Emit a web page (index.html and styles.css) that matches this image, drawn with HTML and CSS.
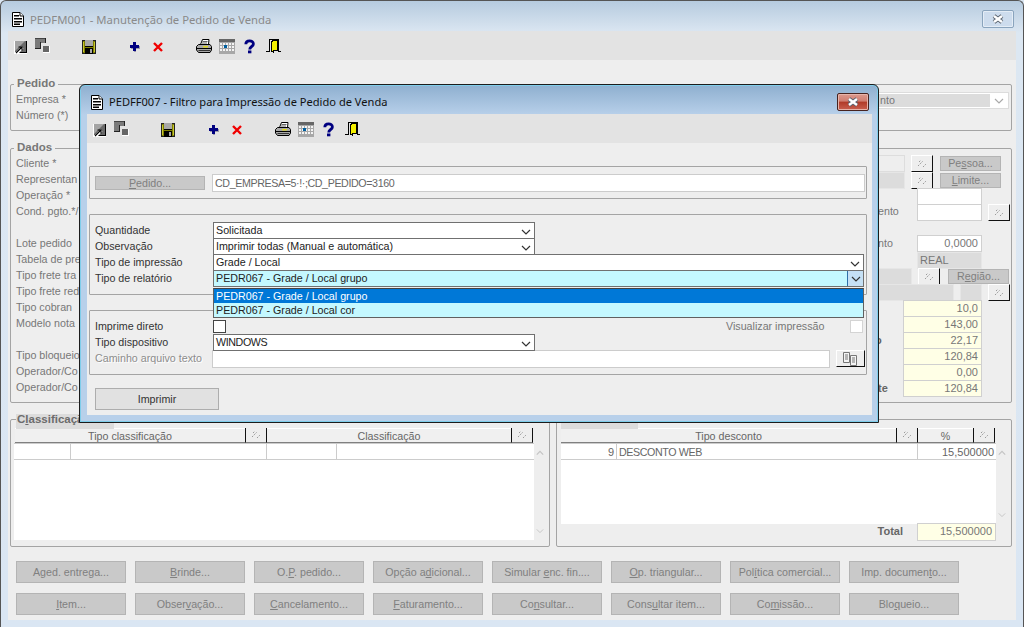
FILE: index.html
```html
<!DOCTYPE html>
<html lang="pt">
<head>
<meta charset="utf-8">
<title>PEDFM001</title>
<link rel="stylesheet" href="styles.css">
</head>
<body>
<svg class="sprite" xmlns="http://www.w3.org/2000/svg">
  <symbol id="i-doc" viewBox="0 0 12 15">
    <path d="M.5.5H8L11.5 4V14.5H.5Z" fill="#fff" stroke="#000"/>
    <path d="M8 .5V4H11.5" fill="#fff" stroke="#000"/>
    <path d="M2 3H7V4.5H2ZM2 6H10V7.5H2ZM2 9H10V10.5H2ZM2 11.5H8V13H2Z" fill="#000"/>
  </symbol>
  <symbol id="i-a" viewBox="0 0 18 18">
    <rect x="0" y="3" width="13" height="13" fill="#fff"/>
    <rect x="1" y="3" width="11" height="11" fill="#6a6a6a"/>
    <path d="M1 3H11L1 13Z" fill="#a4a4a4"/>
    <path d="M12 3H13V15H4V14H12Z" fill="#000"/>
    <path d="M2.500 15.500L8.500 9.500" fill="none" stroke="#fff" stroke-width="2.600"/>
    <path d="M2 15L8 9M4.500 9H8V12.500" fill="none" stroke="#000" stroke-width="1.100"/>
  </symbol>
  <symbol id="i-b" viewBox="0 0 18 18" shape-rendering="crispEdges">
    <rect x="0" y="0" width="11" height="11" fill="#7a7a7a"/>
    <rect x="0" y="0" width="11" height="1" fill="#444"/>
    <rect x="6" y="5" width="5" height="6" fill="#e3e3e3"/>
    <rect x="5" y="4" width="1" height="7" fill="#222"/>
    <rect x="0" y="10" width="6" height="1" fill="#222"/>
    <rect x="10" y="0" width="1" height="5" fill="#222"/>
    <rect x="8" y="8" width="7" height="7" fill="#fff"/>
    <rect x="8" y="8" width="6" height="6" fill="#666"/>
  </symbol>
  <symbol id="i-save" viewBox="0 0 18 18" shape-rendering="crispEdges">
    <rect x="0" y="2" width="14" height="14" fill="#222"/>
    <rect x="1" y="3" width="12" height="12" fill="#808000"/>
    <rect x="1" y="4" width="1" height="10" fill="#c8c830"/>
    <rect x="12" y="4" width="1" height="10" fill="#c8c830"/>
    <rect x="3" y="2" width="8" height="6" fill="#a8a8a8"/>
    <rect x="3" y="8" width="8" height="1" fill="#000"/>
    <rect x="3" y="10" width="8" height="6" fill="#000"/>
    <rect x="8" y="11" width="2" height="4" fill="#a8a8a8"/>
  </symbol>
  <symbol id="i-plus" viewBox="0 0 18 18" shape-rendering="crispEdges">
    <path d="M5 6H7V8H11V11H7V14H5V11H2V9H5Z" fill="#9a9aa8"/>
    <path d="M4 4H7V7H10V10H7V13H4V10H1V7H4Z" fill="#000080"/>
  </symbol>
  <symbol id="i-x" viewBox="0 0 18 18">
    <path d="M1 5L9 13M9 5L1 13" stroke="#f00000" stroke-width="2.400" fill="none"/>
  </symbol>
  <symbol id="i-print" viewBox="0 0 18 18">
    <path d="M4.500 6.500L6.500 1.500H13L12.500 6.500Z" fill="#fff" stroke="#000"/>
    <path d="M6.500 3.500H11.500M6 5H11" stroke="#666"/>
    <path d="M.5 12V8.500L2.500 6.500H14L15.500 8.500V12L14 14.500H2.500Z" fill="#a8a8a8" stroke="#000"/>
    <path d="M1 10.500H15" stroke="#000"/>
    <path d="M2.500 12.500H14" stroke="#333"/>
    <rect x="7" y="8" width="5" height="1.500" fill="#e0d820"/>
  </symbol>
  <symbol id="i-cal" viewBox="0 0 18 18" shape-rendering="crispEdges">
    <rect x="0" y="1" width="16" height="15" fill="#a8a8a8"/>
    <rect x="0" y="1" width="16" height="3" fill="#666"/>
    <g fill="#f4f4f4">
      <rect x="1" y="5" width="2" height="2"/><rect x="4" y="5" width="2" height="2"/><rect x="7" y="5" width="2" height="2"/><rect x="10" y="5" width="2" height="2"/><rect x="13" y="5" width="2" height="2"/>
      <rect x="1" y="8" width="2" height="2"/><rect x="4" y="8" width="2" height="2"/><rect x="7" y="8" width="2" height="2"/><rect x="10" y="8" width="2" height="2"/><rect x="13" y="8" width="2" height="2"/>
      <rect x="1" y="11" width="2" height="2"/><rect x="4" y="11" width="2" height="2"/><rect x="7" y="11" width="2" height="2"/><rect x="10" y="11" width="2" height="2"/><rect x="13" y="11" width="2" height="2"/>
    </g>
    <rect x="5" y="7" width="3" height="3" fill="#005f9f"/>
  </symbol>
  <symbol id="i-help" viewBox="0 0 18 18">
    <path d="M1.800 6.200C1.800 1.800 9.400 1.800 9.400 6C9.400 8.600 5.700 8.400 5.700 11.400" fill="none" stroke="#000080" stroke-width="2.800"/>
    <rect x="4" y="12.500" width="3.400" height="2.800" fill="#000080"/>
  </symbol>
  <symbol id="i-door" viewBox="0 0 18 18" shape-rendering="crispEdges">
    <rect x="3" y="1" width="9" height="1" fill="#000"/>
    <rect x="3" y="1" width="1" height="13" fill="#000"/>
    <rect x="12" y="1" width="1" height="13" fill="#000"/>
    <rect x="0" y="13" width="4" height="1" fill="#000"/>
    <rect x="12" y="13" width="3" height="1" fill="#000"/>
    <path d="M5 3H6V2H12V13H8V15H7V14H5Z" fill="#000"/>
    <path d="M6 4H7V3H11V12H7V13H6Z" fill="#f4f000"/>
  </symbol>
  <symbol id="i-dots" viewBox="0 0 10 8">
    <path d="M2 2L4 0M1 6L6 1M6 7L9 4" fill="none" stroke="#9a9a9a" stroke-dasharray="1.500 1"/>
  </symbol>
  <symbol id="i-chev" viewBox="0 0 10 6">
    <path d="M1 1L5 5L9 1" fill="none" stroke="currentColor" stroke-width="1.200"/>
  </symbol>
  <symbol id="i-chevup" viewBox="0 0 10 6">
    <path d="M1 5L5 1L9 5" fill="none" stroke="currentColor" stroke-width="1.500"/>
  </symbol>
  <symbol id="i-files" viewBox="0 0 16 14">
    <path d="M.5.500H6.500V10.500H.5Z" fill="#f4f4f4" stroke="#777"/>
    <path d="M2 3H5M2 5H5M2 7H5" stroke="#777"/>
    <path d="M7.500 3.500H13.500V13.500H7.500Z" fill="#f4f4f4" stroke="#777"/>
    <path d="M9 6H12M9 8H12M9 10H12" stroke="#777"/>
  </symbol>
  <symbol id="i-close" viewBox="0 0 16 10">
    <path d="M4 2L12 8M12 2L4 8" fill="none" stroke="#5a6470" stroke-width="4.200"/>
    <path d="M4 2L12 8M12 2L4 8" fill="none" stroke="#fff" stroke-width="2.400"/>
  </symbol>
</svg>

<div class="window">
  <header class="titlebar">
    <svg class="ti-doc"><use href="#i-doc"/></svg>
    <span class="title title-off">PEDFM001 - Manutenção de Pedido de Venda</span>
    <span class="close close-off"><svg class="x-glyph"><use href="#i-close"/></svg></span>
  </header>
  <div class="client">
    <div class="toolbar">
      <svg class="ti"><use href="#i-a"/></svg>
      <svg class="ti"><use href="#i-b"/></svg>
      <svg class="ti"><use href="#i-save"/></svg>
      <svg class="ti"><use href="#i-plus"/></svg>
      <svg class="ti"><use href="#i-x"/></svg>
      <svg class="ti"><use href="#i-print"/></svg>
      <svg class="ti"><use href="#i-cal"/></svg>
      <svg class="ti"><use href="#i-help"/></svg>
      <svg class="ti"><use href="#i-door"/></svg>
    </div>
    <main class="content">
      <section class="group g-pedido">
        <span class="legend">Pedido</span>
        <div class="labels">
          <div class="lab">Empresa *</div>
          <div class="lab">Número (*)</div>
        </div>
        <div class="combo-off">
          <span class="combo-val">nto</span>
          <span class="combo-arrow"><svg class="chev chev-off"><use href="#i-chev"/></svg></span>
        </div>
      </section>

      <section class="group g-dados">
        <span class="legend">Dados</span>
        <div class="labels">
          <div class="lab">Cliente *</div>
          <div class="lab">Representan</div>
          <div class="lab">Operação *</div>
          <div class="lab">Cond. pgto.*/</div>
          <div class="lab"></div>
          <div class="lab">Lote pedido</div>
          <div class="lab">Tabela de pre</div>
          <div class="lab">Tipo frete tra</div>
          <div class="lab">Tipo frete red</div>
          <div class="lab">Tipo cobran</div>
          <div class="lab">Modelo nota</div>
          <div class="lab"></div>
          <div class="lab">Tipo bloqueio</div>
          <div class="lab">Operador/Co</div>
          <div class="lab">Operador/Co</div>
        </div>
        <div class="side">
          <div class="srow h17">
            <span class="fld fld-soft w27"></span>
            <span class="sm ml6"><svg class="dots"><use href="#i-dots"/></svg></span>
            <span class="btn-off bs ml7">Pe<u>s</u>soa...</span>
          </div>
          <div class="srow">
            <span class="fld fld-gray w27"></span>
            <span class="sm ml6"><svg class="dots"><use href="#i-dots"/></svg></span>
            <span class="btn-off bs ml7"><u>L</u>imite...</span>
          </div>
          <div class="srow"><span class="fld w65 ml39"></span></div>
          <div class="srow h17">
            <span class="frag frag-up">ento</span>
            <span class="fld w65 ml12"></span>
            <span class="sm ml6"><svg class="dots"><use href="#i-dots"/></svg></span>
          </div>
          <div class="sgap"></div>
          <div class="srow h17">
            <span class="frag">nto</span>
            <span class="fld w65 ml12 num">0,0000</span>
          </div>
          <div class="srow"><span class="fld fld-gray w65 ml39">REAL</span></div>
          <div class="srow">
            <span class="fld fld-gray w34"></span>
            <span class="sm ml6"><svg class="dots"><use href="#i-dots"/></svg></span>
            <span class="btn-off bs ml8">R<u>e</u>gião...</span>
          </div>
          <div class="srow">
            <span class="fld fld-gray w76"></span>
            <span class="fld fld-gray w22 ml6"></span>
            <span class="sm ml6"><svg class="dots"><use href="#i-dots"/></svg></span>
          </div>
          <div class="srow"><span class="fld fld-y w79 ml25 num">10,0</span></div>
          <div class="srow"><span class="fld fld-y w79 ml25 num">143,00</span></div>
          <div class="srow"><b class="frag-b frag-o">o</b><span class="fld fld-y w79 num">22,17</span></div>
          <div class="srow"><span class="fld fld-y w79 ml25 num">120,84</span></div>
          <div class="srow"><span class="fld fld-y w79 ml25 num">0,00</span></div>
          <div class="srow"><b class="frag-b">te</b><span class="fld fld-y w79 num">120,84</span></div>
        </div>
      </section>

      <div class="bottom">
        <section class="group g-class">
          <span class="legend legend-box lb-class">C<u>l</u>assificação</span>
          <div class="thead thead-class">
            <span class="th thw1">Tipo classificação</span>
            <span class="thb"><svg class="dots"><use href="#i-dots"/></svg></span>
            <span class="th thw2">Classificação</span>
            <span class="thb"><svg class="dots"><use href="#i-dots"/></svg></span>
          </div>
          <div class="tbody-wrap">
            <div class="tbody tb-class">
              <div class="trow">
                <span class="td c57"></span><span class="td c196"></span><span class="td c70"></span><span class="td fill"></span>
              </div>
            </div>
            <div class="scroll">
              <svg class="sc"><use href="#i-chevup"/></svg>
              <svg class="sc"><use href="#i-chev"/></svg>
            </div>
          </div>
        </section>

        <section class="group g-desc">
          <span class="legend legend-box lb-desc">Desconto</span>
          <div class="thead">
            <span class="th thw3">Tipo desconto</span>
            <span class="thb"><svg class="dots"><use href="#i-dots"/></svg></span>
            <span class="th thw4">%</span>
            <span class="thb"><svg class="dots"><use href="#i-dots"/></svg></span>
          </div>
          <div class="tbody-wrap">
            <div class="tbody tb-desc">
              <div class="trow">
                <span class="td c56 tnum">9</span><span class="td c301 caps">DESCONTO WEB</span><span class="td fill tnum">15,500000</span>
              </div>
            </div>
            <div class="scroll">
              <svg class="sc"><use href="#i-chevup"/></svg>
              <svg class="sc"><use href="#i-chev"/></svg>
            </div>
          </div>
          <div class="total">
            <b class="total-l">Total</b>
            <span class="fld fld-y w79 total-f num">15,500000</span>
          </div>
        </section>
      </div>

      <div class="actions">
        <span class="btn-off">A<u>g</u>ed. entrega...</span>
        <span class="btn-off"><u>B</u>rinde...</span>
        <span class="btn-off">O.<u>P</u>. pedido...</span>
        <span class="btn-off">Opção a<u>d</u>icional...</span>
        <span class="btn-off">Simular <u>e</u>nc. fin....</span>
        <span class="btn-off"><u>O</u>p. triangular...</span>
        <span class="btn-off">Pol<u>í</u>tica comercial...</span>
        <span class="btn-off">Imp. documen<u>t</u>o...</span>
        <span class="btn-off"><u>I</u>tem...</span>
        <span class="btn-off">Obser<u>v</u>ação...</span>
        <span class="btn-off"><u>C</u>ancelamento...</span>
        <span class="btn-off"><u>F</u>aturamento...</span>
        <span class="btn-off">Co<u>n</u>sultar...</span>
        <span class="btn-off">Cons<u>u</u>ltar item...</span>
        <span class="btn-off">Co<u>m</u>issão...</span>
        <span class="btn-off">Blo<u>q</u>ueio...</span>
      </div>
    </main>
  </div>

  <div class="modal">
    <header class="titlebar">
      <svg class="ti-doc"><use href="#i-doc"/></svg>
      <span class="title">PEDFF007 - Filtro para Impressão de Pedido de Venda</span>
      <span class="close close-on"><svg class="x-glyph"><use href="#i-close"/></svg></span>
    </header>
    <div class="client">
      <div class="toolbar">
        <svg class="ti"><use href="#i-a"/></svg>
        <svg class="ti"><use href="#i-b"/></svg>
        <svg class="ti"><use href="#i-save"/></svg>
        <svg class="ti"><use href="#i-plus"/></svg>
        <svg class="ti"><use href="#i-x"/></svg>
        <svg class="ti"><use href="#i-print"/></svg>
        <svg class="ti"><use href="#i-cal"/></svg>
        <svg class="ti"><use href="#i-help"/></svg>
        <svg class="ti"><use href="#i-door"/></svg>
      </div>
      <div class="mcontent">
        <section class="mgroup mg1">
          <span class="btn-off bp"><u>P</u>edido...</span>
          <span class="fld-text caps">CD_EMPRESA=5·!·;CD_PEDIDO=3160</span>
        </section>
        <section class="mgroup mg2">
          <div class="frow"><span class="flab">Quantidade</span><span class="sel sel-s">Solicitada<svg class="chev"><use href="#i-chev"/></svg></span></div>
          <div class="frow"><span class="flab">Observação</span><span class="sel sel-s">Imprimir todas (Manual e automática)<svg class="chev"><use href="#i-chev"/></svg></span></div>
          <div class="frow"><span class="flab">Tipo de impressão</span><span class="sel sel-w">Grade / Local<svg class="chev"><use href="#i-chev"/></svg></span></div>
          <div class="frow"><span class="flab">Tipo de relatório</span><span class="sel sel-w sel-focus">PEDR067 - Grade / Local grupo<span class="sel-btn"><svg class="chev"><use href="#i-chev"/></svg></span></span></div>
          <ul class="dropdown">
            <li class="opt opt-on">PEDR067 - Grade / Local grupo</li>
            <li class="opt">PEDR067 - Grade / Local cor</li>
          </ul>
        </section>
        <section class="mgroup mg3">
          <div class="frow f14">
            <span class="flab flab-top">Imprime direto</span>
            <span class="chk"></span>
            <span class="vis">Visualizar impressão</span>
            <span class="chk chk-off"></span>
          </div>
          <div class="frow"><span class="flab">Tipo dispositivo</span><span class="sel sel-s caps">WINDOWS<svg class="chev"><use href="#i-chev"/></svg></span></div>
          <div class="frow f18">
            <span class="flab flab-off">Caminho arquivo texto</span>
            <span class="path"></span>
            <span class="browse"><svg class="files"><use href="#i-files"/></svg></span>
          </div>
        </section>
        <div class="btn-print">Imprimir</div>
      </div>
    </div>
  </div>
</div>
</body>
</html>
```
FILE: styles.css
```css
* { box-sizing: border-box; }
html, body { margin: 0; padding: 0; }
body {
  width: 1024px;
  height: 627px;
  overflow: hidden;
  font: 10.7px/16px "Liberation Sans", Arial, sans-serif;
  color: #777;
  background: #dae6f3;
}
.sprite { display: none; }
.caps { letter-spacing: -0.4px; }

/* main window */
.window {
  position: relative;
  width: 1024px;
  height: 627px;
  border: 1px solid #555;
  border-bottom: 0;
  border-radius: 6px 6px 0 0;
  padding: 0 7px 7px;
  background: linear-gradient(#b6cbdf 0, #dce7f2 32px, #dae6f3 100%);
  display: flex;
  flex-direction: column;
}
.titlebar {
  display: flex;
  align-items: center;
  height: 30px;
  flex: none;
  padding-left: 4px;
  padding-top: 7px;
}
.ti-doc { width: 12px; height: 15px; margin-right: 6px; flex: none; }
.title { font: 11.3px/16px "Noto Sans", "Open Sans", sans-serif; color: #111; flex: 1; }
.modal .title { font-size: 11.1px; }
.title-off { color: #8a8a8a; }
.close {
  width: 32px;
  height: 18px;
  margin-right: 2px;
  margin-top: -2px;
  border-radius: 2px;
  display: flex;
  align-items: center;
  justify-content: center;
}
.close-off { border: 1px solid #8aa4bd; background: #cddced; box-shadow: inset 0 0 0 1px #e4edf6; }
.close-on {
  border: 1px solid #47231f;
  background: linear-gradient(#dc9a8e 0, #cf7d70 45%, #b03a28 50%, #c9604f 100%);
  box-shadow: inset 0 0 0 1px #e6b3a9;
}
.x-glyph { width: 16px; height: 10px; }

.client {
  flex: 1;
  display: flex;
  flex-direction: column;
  background: #eee;
  min-height: 0;
}
.toolbar {
  height: 29px;
  flex: none;
  background: #e3e3e3;
  padding: 7px 0 0 6px;
  display: grid;
  grid-template-columns: 21px 47px 47px 24px 43px 23px 25px 22px 18px;
  align-content: start;
}
.ti { width: 18px; height: 18px; display: block; }

.content { padding: 24px 0 0 2px; }

/* groups */
.group {
  position: relative;
  border: 1px solid #a4a4a4;
  border-radius: 2px;
  width: 1002px;
}
.legend {
  position: absolute;
  left: 3px;
  top: -9px;
  padding: 0 3px;
  background: #eee;
  font-weight: bold;
  font-size: 11.5px;
  line-height: 15px;
  color: #777;
}
.legend-box { background: #dcdcdc; left: 5px; top: -6px; height: 15px; line-height: 11px; padding: 0 1px; color: #6c6c6c; }
.lb-class { width: 98px; }
.lb-desc { left: 4px; width: 77px; }
.lab { height: 16px; white-space: nowrap; }
.labels { width: 63px; flex: none; }

.g-pedido { height: 47px; display: flex; justify-content: space-between; padding: 6px 2px 0 5px; }
.combo-off {
  width: 131px; height: 17px; margin-top: 1px;
  border: 1px solid #dcdcdc;
  background: #fff;
  display: flex;
}
.combo-val { flex: 1; background: #dcdcdc; margin: 1px 0; padding-left: 1px; line-height: 13px; }
.combo-arrow { width: 18px; display: flex; align-items: center; justify-content: center; }
.chev { width: 10px; height: 6px; color: #333; flex: none; }
.chev-off { color: #aaa; }

.g-dados {
  height: 255px;
  margin-top: 17px;
  display: flex;
  justify-content: space-between;
  padding: 6px 1px 0 5px;
}
.side { width: 132px; flex: none; }
.srow { height: 16px; display: flex; align-items: flex-start; }
.h17 { height: 17px; }
.sgap { height: 14px; }
.fld {
  height: 17px;
  flex: none;
  display: block;
  border: 1px solid #d0d0d0;
  background: #fff;
  padding: 0 2px;
  line-height: 15px;
  font-size: 11px;
}
.num { text-align: right; padding-right: 3px; }
.fld-soft { background: #eee; border-color: #ddd; }
.fld-gray { background: #dcdcdc; border-color: #e6e6e6; }
.fld-y { background: #ffffe6; }
.w22 { width: 22px; } .w27 { width: 27px; } .w34 { width: 34px; } .w65 { width: 65px; }
.w76 { width: 76px; } .w79 { width: 79px; }
.ml6 { margin-left: 6px; } .ml7 { margin-left: 7px; } .ml8 { margin-left: 8px; }
.ml12 { margin-left: 12px; } .ml25 { margin-left: 25px; } .ml39 { margin-left: 39px; }
.frag { width: 27px; flex: none; line-height: 16px; }
.frag-up { line-height: 14px; }
.frag-b { width: 25px; flex: none; color: #666; font-size: 11px; }
.frag-o { text-indent: -3px; }
.sm {
  width: 22px;
  height: 17px;
  flex: none;
  display: flex;
  align-items: center;
  justify-content: center;
  background: #eee;
  border-top: 1px solid #fff;
  border-left: 1px solid #fff;
  border-right: 1px solid #111;
  border-bottom: 1px solid #111;
}
.dots { width: 10px; height: 8px; flex: none; }

.btn-off {
  display: block;
  height: 22px;
  width: 110px;
  background: #c9c9c9;
  border: 1px solid #b4b4b4;
  color: #808080;
  text-align: center;
  line-height: 20px;
  white-space: nowrap;
}
.bs { width: 61px; height: 15px; margin-top: 1px; line-height: 13px; flex: none; }
.bp { height: 14px; line-height: 12px; flex: none; }

/* bottom */
.bottom { display: flex; gap: 6px; margin-top: 16px; }
.g-class { width: 540px; height: 128px; padding: 8px 0 0 3px; }
.g-desc { width: 456px; height: 128px; padding: 8px 0 0 4px; }
.thead { display: flex; height: 15px; }
.thead-class { padding-left: 1px; }
.th {
  background: #f0f0f0;
  border-top: 1px solid #fff;
  border-bottom: 1px solid #808080;
  text-align: center;
  line-height: 14px;
  color: #666;
}
.thb {
  width: 22px;
  display: flex;
  align-items: center;
  justify-content: center;
  background: #eee;
  border-left: 1px solid #111;
  border-right: 1px solid #111;
  border-bottom: 1px solid #808080;
}
.thw1 { width: 230px; }
.thw2 { width: 244px; }
.thw3 { width: 335px; }
.thw4 { width: 55px; }
.tbody-wrap { display: flex; }
.tbody { background: #fff; flex: none; }
.tb-class { width: 520px; height: 97px; }
.tb-desc { width: 435px; height: 81px; }
.trow { display: flex; height: 17px; border-bottom: 1px solid #ccc; border-top: 1px solid #ccc; }
.td { display: block; height: 15px; border-right: 1px solid #ccc; line-height: 16px; color: #666; padding: 0 2px; }
.c56 { width: 56px; } .c57 { width: 57px; } .c70 { width: 70px; } .c196 { width: 196px; } .c301 { width: 301px; }
.fill { flex: 1; border-right: 0; }
.tnum { text-align: right; padding-right: 2px; font-size: 11px; }
.scroll {
  width: 12px;
  display: flex;
  flex-direction: column;
  justify-content: space-between;
  align-items: center;
  padding: 7px 0 6px;
}
.sc { width: 8px; height: 6px; color: #c4c4c4; }
.total { display: flex; justify-content: flex-end; align-items: flex-start; width: 435px; margin-top: -1px; }
.total-l { margin-right: 14px; line-height: 16px; color: #666; font-size: 11px; }
.total-f { height: 18px; }

.actions {
  display: grid;
  grid-template-columns: repeat(8, 110px);
  gap: 10px 9px;
  margin: 14px 0 0 6px;
}

/* modal */
.modal {
  position: absolute;
  left: 78px;
  top: 83px;
  width: 800px;
  height: 339px;
  border: 1px solid #1c1c1c;
  border-radius: 6px 6px 0 0;
  box-shadow: inset 0 0 0 1px #7fcdea;
  padding: 0 6px 7px 7px;
  background: linear-gradient(#8eafcf 0, #b8d0ea 30px, #b8d0ea 100%);
  display: flex;
  flex-direction: column;
}
.modal .titlebar { padding-left: 4px; padding-top: 5px; height: 29px; }
.modal .close { margin-right: 3px; margin-top: -1px; }
.modal .client { color: #333; }
.mcontent { padding: 23px 0 0 2px; }
.mgroup {
  position: relative;
  width: 778px;
  border: 1px solid #a4a4a4;
  border-radius: 1px;
}
.mg1 { height: 33px; display: flex; align-items: center; padding-left: 5px; gap: 7px; }
.fld-text {
  width: 653px; height: 18px; flex: none;
  border: 1px solid #ccc; background: #fff;
  padding-left: 2px; line-height: 16px; color: #666;
}
.mg2 { height: 81px; margin-top: 15px; padding: 7px 0 0 5px; }
.mg3 { height: 65px; margin-top: 15px; padding: 9px 0 0 5px; }
.frow { display: flex; height: 16px; align-items: flex-start; }
.f14 { height: 14px; }
.f18 { height: 18px; }
.flab { width: 118px; flex: none; line-height: 16px; color: #333; white-space: nowrap; }
.flab-top { line-height: 13px; }
.flab-off { color: #8c8c8c; text-shadow: 1px 1px 0 #fff; width: 117px; }
.sel {
  position: relative;
  display: flex;
  justify-content: space-between;
  align-items: center;
  height: 17px;
  border: 1px solid #707070;
  background: #fff;
  padding: 0 3px 2px 2px;
  color: #222;
  flex: none;
  white-space: nowrap;
}
.sel .chev { margin-top: 4px; }
.sel-s { width: 322px; }
.sel-w { width: 651px; }
.sel-focus { background: #c4f8ff; padding-right: 0; }
.sel-btn {
  width: 16px; height: 15px;
  align-self: flex-start;
  background: #c5e0f5;
  border-left: 1px solid #2f6fa8;
  display: flex; align-items: center; justify-content: center;
}
.sel-btn .chev { margin: 0; }
.dropdown {
  position: absolute;
  left: 123px;
  top: 73px;
  width: 651px;
  height: 30px;
  margin: 0;
  padding: 0;
  list-style: none;
  border: 1px solid #606060;
  border-top-color: #444;
  background: #c4f8ff;
  z-index: 2;
}
.opt { height: 14px; line-height: 14px; padding-left: 2px; color: #222; white-space: nowrap; }
.opt-on { background: #0078d7; color: #fff; }
.chk { width: 13px; height: 13px; flex: none; background: #fff; border: 1px solid #444; }
.chk-off { border-color: #d4d4d4; margin-left: 23px; }
.vis { margin-left: 500px; width: 101px; color: #777; line-height: 13px; flex: none; white-space: nowrap; }
.path { width: 618px; height: 18px; flex: none; background: #fff; border: 1px solid #ccc; }
.browse {
  width: 29px; height: 17px; margin-left: 6px; flex: none;
  display: flex; align-items: center; justify-content: center;
  background: #eee;
  border-top: 1px solid #fff;
  border-left: 1px solid #fff;
  border-right: 1px solid #111;
  border-bottom: 1px solid #111;
}
.files { width: 16px; height: 14px; }
.btn-print {
  width: 124px;
  height: 22px;
  margin: 13px 0 0 6px;
  background: #e1e1e1;
  border: 1px solid #adadad;
  text-align: center;
  line-height: 20px;
  color: #333;
}
```
